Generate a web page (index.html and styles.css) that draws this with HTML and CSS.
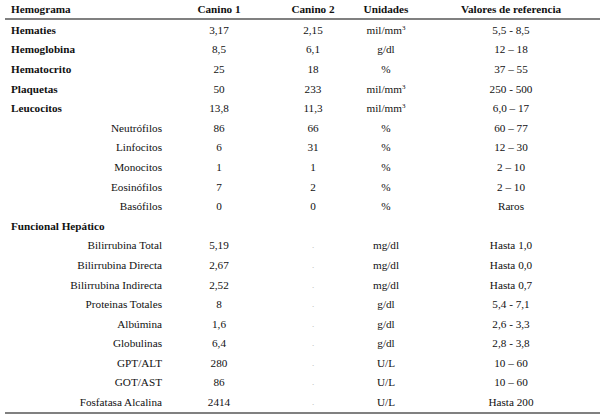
FILE: index.html
```html
<!DOCTYPE html>
<html lang="es">
<head>
<meta charset="utf-8">
<title>Hemograma</title>
<link rel="stylesheet" href="styles.css">
</head>
<body>
<table class="lab">
  <colgroup>
    <col class="c-name"><col class="c-v1"><col class="c-v2"><col class="c-unit"><col class="c-ref">
  </colgroup>
  <thead>
    <tr><th class="name">Hemograma</th><th>Canino 1</th><th>Canino 2</th><th>Unidades</th><th>Valores de referencia</th></tr>
  </thead>
  <tbody>
    <tr><td class="name main">Hematies</td><td>3,17</td><td>2,15</td><td>mil/mm<sup>3</sup></td><td>5,5 - 8,5</td></tr>
    <tr><td class="name main">Hemoglobina</td><td>8,5</td><td>6,1</td><td>g/dl</td><td>12 – 18</td></tr>
    <tr><td class="name main">Hematocrito</td><td>25</td><td>18</td><td>%</td><td>37 – 55</td></tr>
    <tr><td class="name main">Plaquetas</td><td>50</td><td>233</td><td>mil/mm<sup>3</sup></td><td>250 - 500</td></tr>
    <tr><td class="name main">Leucocitos</td><td>13,8</td><td>11,3</td><td>mil/mm<sup>3</sup></td><td>6,0 – 17</td></tr>
    <tr><td class="sub">Neutrófilos</td><td>86</td><td>66</td><td>%</td><td>60 – 77</td></tr>
    <tr><td class="sub">Linfocitos</td><td>6</td><td>31</td><td>%</td><td>12 – 30</td></tr>
    <tr><td class="sub">Monocitos</td><td>1</td><td>1</td><td>%</td><td>2 – 10</td></tr>
    <tr><td class="sub">Eosinófilos</td><td>7</td><td>2</td><td>%</td><td>2 – 10</td></tr>
    <tr><td class="sub">Basófilos</td><td>0</td><td>0</td><td>%</td><td>Raros</td></tr>
    <tr><td class="name main">Funcional Hepático</td><td></td><td></td><td></td><td></td></tr>
    <tr><td class="sub">Bilirrubina Total</td><td>5,19</td><td class="dot">.</td><td>mg/dl</td><td>Hasta 1,0</td></tr>
    <tr><td class="sub">Bilirrubina Directa</td><td>2,67</td><td class="dot">.</td><td>mg/dl</td><td>Hasta 0,0</td></tr>
    <tr><td class="sub">Bilirrubina Indirecta</td><td>2,52</td><td class="dot">.</td><td>mg/dl</td><td>Hasta 0,7</td></tr>
    <tr><td class="sub">Proteinas Totales</td><td>8</td><td class="dot">.</td><td>g/dl</td><td>5,4 - 7,1</td></tr>
    <tr><td class="sub">Albúmina</td><td>1,6</td><td class="dot">.</td><td>g/dl</td><td>2,6 - 3,3</td></tr>
    <tr><td class="sub">Globulinas</td><td>6,4</td><td class="dot">.</td><td>g/dl</td><td>2,8 - 3,8</td></tr>
    <tr><td class="sub">GPT/ALT</td><td>280</td><td class="dot">.</td><td>U/L</td><td>10 – 60</td></tr>
    <tr><td class="sub">GOT/AST</td><td>86</td><td class="dot">.</td><td>U/L</td><td>10 – 60</td></tr>
    <tr><td class="sub">Fosfatasa Alcalina</td><td>2414</td><td class="dot">.</td><td>U/L</td><td>Hasta 200</td></tr>
  </tbody>
</table>
</body>
</html>
```
FILE: styles.css
```css
html, body {
  margin: 0;
  padding: 0;
  background: #ffffff;
}
body {
  font-family: "Liberation Serif", "Times New Roman", serif;
  font-size: 11.2px;
  color: #111111;
}
.lab {
  margin-left: 5px;
  width: 595px;
  table-layout: fixed;
  border-collapse: collapse;
  border-bottom: 2px solid #808080;
}
.c-name { width: 157px; }
.c-v1 { width: 114px; }
.c-v2 { width: 74px; }
.c-unit { width: 72px; }
.c-ref { width: 178px; }
th {
  font-weight: bold;
  height: 18px;
  padding: 0;
  text-align: center;
  vertical-align: middle;
  border-bottom: 2px solid #808080;
  white-space: nowrap;
}
td {
  height: 19.6px;
  padding: 0;
  text-align: center;
  vertical-align: middle;
  white-space: nowrap;
}
th.name, td.name {
  text-align: left;
  padding-left: 6px;
}
td.main {
  font-weight: bold;
}
td.sub {
  text-align: right;
  padding-right: 0;
}
td.dot {
  color: #b0b0b0;
  font-size: 9px;
  text-align: left;
  padding-left: 36px;
}
sup {
  font-size: 7px;
  line-height: 0;
  vertical-align: 4px;
}
```
